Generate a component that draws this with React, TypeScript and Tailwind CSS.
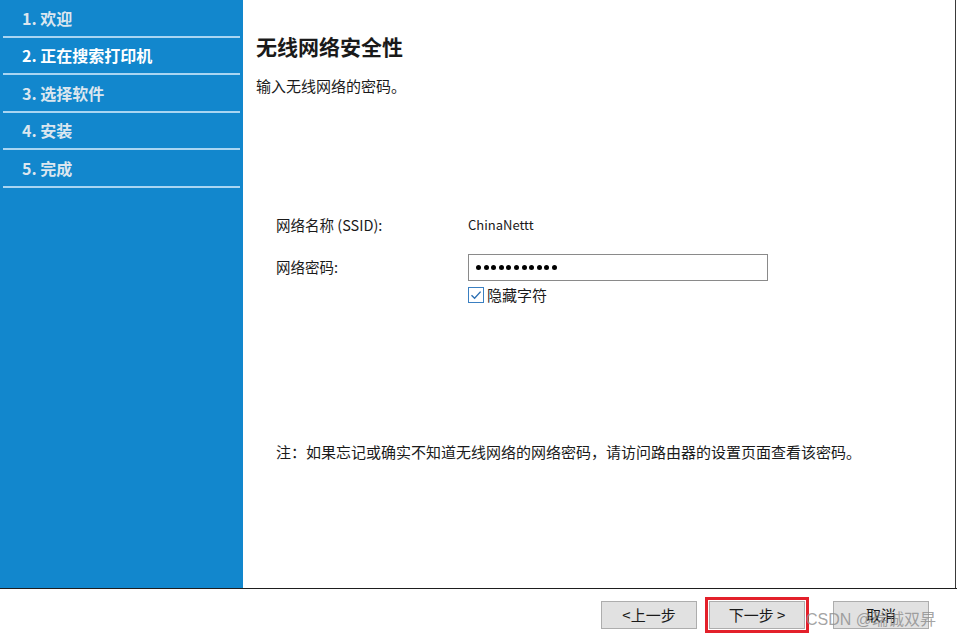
import React from 'react';

const steps = [
  { label: '1. 欢迎', active: false },
  { label: '2. 正在搜索打印机', active: true },
  { label: '3. 选择软件', active: false },
  { label: '4. 安装', active: false },
  { label: '5. 完成', active: false },
];

const font = { fontFamily: '"Noto Sans CJK SC", "Liberation Sans", sans-serif' };

const WinButton = ({ children, disabled }: { children: React.ReactNode; disabled?: boolean }) => (
  <button
    className={
      'h-[28px] w-[96px] border border-[#adadad] bg-[#e1e1e1] text-[15px] leading-none ' +
      (disabled ? 'text-[#6d6d6d]' : 'text-[#1a1a1a]')
    }
  >
    {children}
  </button>
);

export default function App() {
  return (
    <div className="relative h-[638px] w-[957px] overflow-hidden bg-white" style={font}>
      {/* Top area */}
      <div className="flex h-[589px] border-b border-[#1e1e1e] pr-[1px]">
        <div className="flex h-full w-full border-r border-[#3a3a3a]">
          {/* Sidebar */}
          <aside className="h-full w-[243px] shrink-0 bg-[#1287cd] px-[3px]">
            {steps.map((s) => (
              <div
                key={s.label}
                className="flex h-[37.5px] items-center border-b-2 border-[#a9d5f2] pl-[19px]"
              >
                <span
                  className={
                    'text-[16px] font-bold ' + (s.active ? 'text-white' : 'text-[#dbe6ef]')
                  }
                >
                  {s.label}
                </span>
              </div>
            ))}
          </aside>

          {/* Content */}
          <main className="flex flex-1 flex-col pl-[13px] pt-[33px] text-[#1a1a1a]">
            <h1 className="text-[21px] font-bold leading-[26px]">无线网络安全性</h1>
            <p className="mt-[17px] text-[15px] leading-[20px]">输入无线网络的密码。</p>

            <div className="ml-[20px] mt-[118px] flex flex-col">
              <div className="flex items-center text-[14.5px]">
                <span className="w-[192px]">网络名称 (SSID):</span>
                <span className="text-[13px]">ChinaNettt</span>
              </div>
              <div className="mt-[18px] flex items-center text-[14.5px]">
                <span className="w-[192px]">网络密码:</span>
                <div className="flex h-[27px] w-[300px] items-center gap-[2.6px] border border-[#8a8a8a] bg-white pl-[7px]">
                  {Array.from({ length: 11 }).map((_, i) => (
                    <span key={i} className="h-[5px] w-[5px] rounded-full bg-black" />
                  ))}
                </div>
              </div>
              <div className="ml-[192px] mt-[5px] flex items-center gap-[3px]">
                <span className="flex h-[16px] w-[16px] items-center justify-center border border-[#3a7fc1] bg-white">
                  <svg viewBox="0 0 12 12" className="h-[12px] w-[12px]">
                    <path d="M1.5 6.2 L4.6 9.2 L10.6 2.6" fill="none" stroke="#2b6fb3" strokeWidth="1.4" />
                  </svg>
                </span>
                <span className="text-[15px] leading-[18px]">隐藏字符</span>
              </div>
            </div>

            <p className="ml-[20px] mt-[138px] text-[15px] leading-[20px]">
              注：如果忘记或确实不知道无线网络的网络密码，请访问路由器的设置页面查看该密码。
            </p>
          </main>
        </div>
      </div>

      {/* Footer */}
      <footer className="flex h-[49px] items-center pl-[601px] pt-[2px]">
        <WinButton>&lt;上一步</WinButton>
        <div className="ml-[8px] border-[3px] border-[#e3202a] p-[1px]">
          <WinButton>下一步 &gt;</WinButton>
        </div>
        <div className="ml-[24px]">
          <WinButton>取消</WinButton>
        </div>
      </footer>

      {/* Watermark */}
      <span className="absolute left-[806px] top-[607px] text-[16px] leading-[22px] text-[#8c8c8c]/80">
        <span style={{ fontFamily: '"Liberation Sans", sans-serif' }}>CSDN @</span>瑞诚双昇
      </span>
    </div>
  );
}
